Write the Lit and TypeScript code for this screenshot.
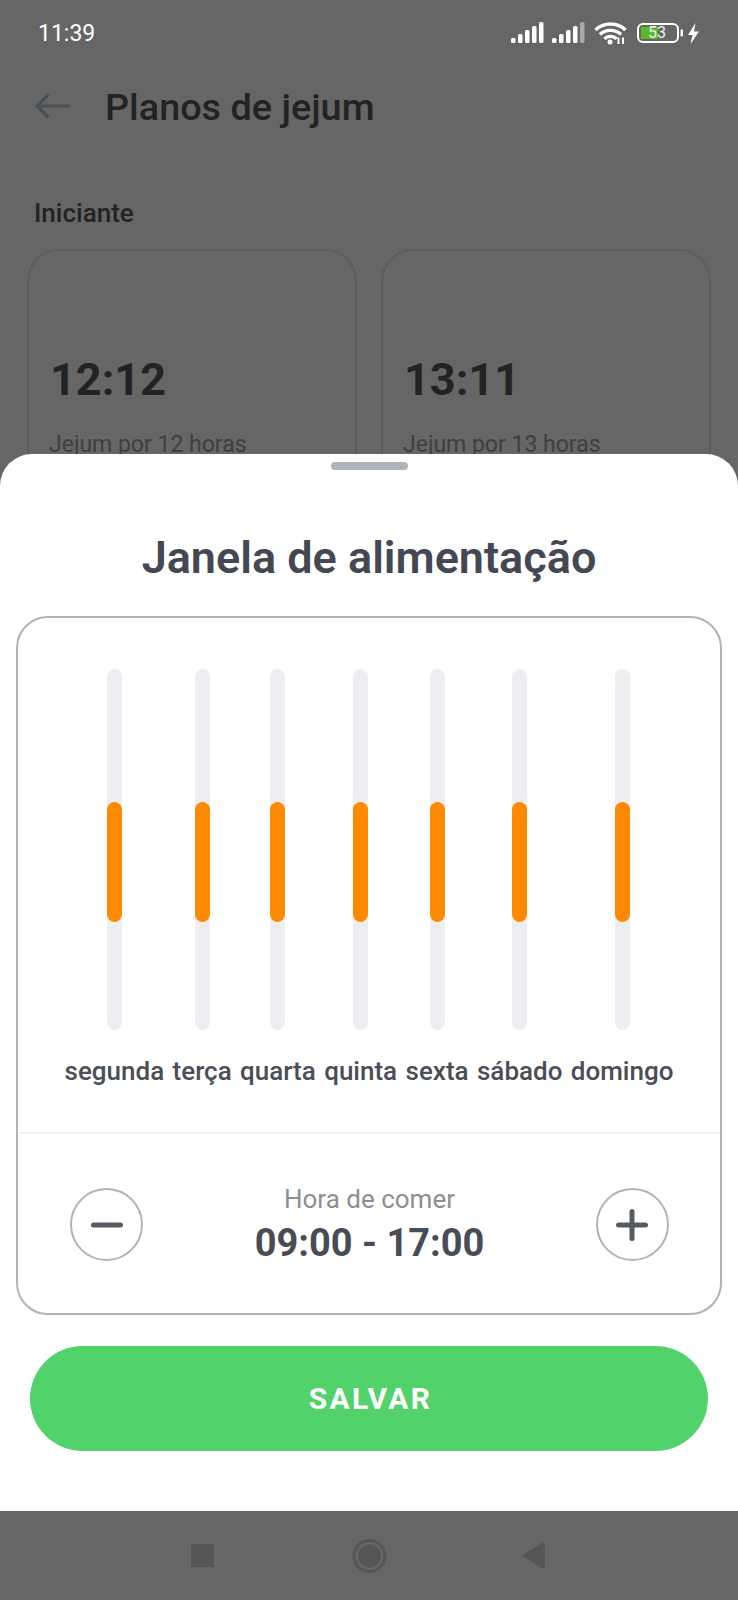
import { LitElement, html, css, svg } from 'lit';
import { customElement } from 'lit/decorators.js';

const DAYS = ['segunda', 'terça', 'quarta', 'quinta', 'sexta', 'sábado', 'domingo'];

const signal = (last: string) => svg`
  <svg class="signal" width="33" height="22" viewBox="0 0 33 22">
    <rect x="0" y="16" width="4.5" height="5" rx="1.5" fill="#fff" />
    <rect x="7" y="12" width="4.5" height="9" rx="1.5" fill="#fff" />
    <rect x="14" y="8" width="4.5" height="13" rx="1.5" fill="#fff" />
    <rect x="21" y="4" width="4.5" height="17" rx="1.5" fill="#fff" />
    <rect x="28" y="0" width="4.5" height="21" rx="1.5" fill="${last}" />
  </svg>
`;

@customElement('app-root')
export class AppRoot extends LitElement {
  static styles = css`
    :host {
      display: block;
      width: 738px;
      height: 1600px;
      background: #666;
      font-family: Roboto, 'Noto Sans', sans-serif;
      overflow: hidden;
    }

    .page {
      display: flex;
      flex-direction: column;
      height: 1600px;
    }

    .behind {
      height: 454px;
      flex: none;
      overflow: hidden;
      box-sizing: border-box;
    }

    .status {
      display: flex;
      align-items: center;
      height: 22px;
      padding: 22px 38px 0 38px;
      color: #fff;
      font-size: 23px;
      line-height: 22px;
    }

    .status .time {
      flex: 1;
      margin-top: 2px;
    }

    .status svg {
      display: block;
      flex: none;
    }

    .status .signal {
      margin-right: 8px;
    }

    .status .wifi {
      margin: 0 10px 0 1px;
    }

    .status .bolt {
      margin-left: 4px;
    }

    .battery {
      position: relative;
      flex: none;
      width: 46px;
      height: 20px;
    }

    .battery .pct {
      position: absolute;
      left: 8px;
      top: 0;
      width: 24px;
      text-align: center;
      font-size: 16px;
      line-height: 20px;
      color: #eef5e8;
    }

    .header {
      display: flex;
      align-items: center;
      gap: 34px;
      height: 46px;
      padding: 40px 0 0 35px;
    }

    .header svg {
      margin-top: -2px;
    }

    .header h1 {
      margin: 0;
      font-size: 37.8px;
      line-height: 46px;
      font-weight: 500;
      color: #232323;
    }

    .section {
      margin: 68px 0 0 34px;
      font-size: 26px;
      line-height: 30px;
      font-weight: 500;
      color: #232323;
    }

    .plans {
      display: flex;
      gap: 24px;
      padding: 21px 27px 0 27px;
    }

    .plan {
      flex: 1;
      height: 300px;
      box-sizing: border-box;
      border: 2px solid #5c5c5c;
      border-radius: 32px;
      padding: 101px 0 0 21px;
    }

    .plan .ratio {
      font-size: 45px;
      line-height: 56px;
      font-weight: 700;
      color: #232323;
    }

    .plan .desc {
      margin-top: 23px;
      margin-left: -1px;
      font-size: 23px;
      line-height: 28px;
      color: #3f3f3f;
    }

    .sheet {
      flex: 1;
      display: flex;
      flex-direction: column;
      align-items: center;
      background: #fff;
      border-radius: 32px 32px 0 0;
    }

    .handle {
      width: 77px;
      height: 8px;
      margin-top: 8px;
      border-radius: 4px;
      background: #aeb4ba;
    }

    .sheet h2 {
      margin: 58px 0 0;
      font-size: 45px;
      line-height: 60px;
      font-weight: 600;
      color: #434852;
    }

    .card {
      box-sizing: border-box;
      width: 706px;
      height: 699px;
      margin-top: 28px;
      border: 2px solid #b0b3b6;
      border-radius: 32px;
      display: flex;
      flex-direction: column;
    }

    .days {
      display: flex;
      justify-content: center;
      gap: 8.4px;
      height: 516px;
      padding-top: 51px;
      box-sizing: border-box;
      border-bottom: 2px solid #f1f2f4;
    }

    .day {
      display: flex;
      flex-direction: column;
      align-items: center;
      gap: 25px;
      font-size: 26px;
      line-height: 32px;
      font-weight: 500;
      color: #4a4e57;
    }

    .track {
      display: flow-root;
      width: 15px;
      height: 361px;
      border-radius: 8px;
      background: #edeef2;
    }

    .fill {
      width: 15px;
      height: 120px;
      margin-top: 133px;
      border-radius: 8px;
      background: #ff8a00;
    }

    .hours {
      flex: 1;
      display: flex;
      align-items: center;
      justify-content: space-between;
      padding: 2px 51px 0 52px;
    }

    .round {
      display: flex;
      align-items: center;
      justify-content: center;
      width: 73px;
      height: 73px;
      box-sizing: border-box;
      border: 2px solid #b0b3b6;
      border-radius: 50%;
    }

    .eating {
      text-align: center;
    }

    .eating .label {
      margin-bottom: 2px;
      font-size: 26px;
      line-height: 34px;
      color: #8b8e94;
    }

    .eating .range {
      font-size: 38px;
      line-height: 50px;
      font-weight: 700;
      color: #474c56;
    }

    .save {
      display: flex;
      align-items: center;
      justify-content: center;
      width: 678px;
      height: 105px;
      margin-top: 31px;
      padding-left: 3px;
      box-sizing: border-box;
      border-radius: 53px;
      background: #52d26a;
      color: #fff;
      font-size: 30px;
      font-weight: 700;
      letter-spacing: 2.3px;
    }

    .nav {
      flex: none;
      height: 89px;
      display: flex;
      align-items: flex-start;
      padding-top: 28px;
      box-sizing: border-box;
    }

    .nav svg {
      display: block;
    }
  `;

  render() {
    return html`
      <div class="page">
        <div class="behind">
          <div class="status">
            <span class="time">11:39</span>
            ${signal('#fff')} ${signal('#a9a9a9')}
            <svg class="wifi" width="33" height="23" viewBox="0 0 33 23" fill="none" stroke="#fff" stroke-width="3.4">
              <path d="M1.5 8 C9.5 0 23.5 0 31.5 8" />
              <path d="M6 12.5 C11.5 7 21.5 7 27 12.5" />
              <path d="M10.5 17 C13.5 13.5 19.5 13.5 22.5 17" />
              <circle cx="16" cy="20" r="2.5" fill="#fff" stroke="none" />
              <path d="M24.5 15.5 V22 M29 15.5 V22" stroke-width="2" />
            </svg>
            <div class="battery">
              <svg width="46" height="20" viewBox="0 0 46 20">
                <rect x="1" y="1" width="40" height="18" rx="5" fill="none" stroke="#fff" stroke-width="2" />
                <rect x="4" y="4" width="17" height="12" rx="1" fill="#5cb82a" />
                <rect x="43.5" y="6.5" width="2.5" height="7" rx="1" fill="#fff" />
              </svg>
              <span class="pct">53</span>
            </div>
            <svg class="bolt" width="13" height="21" viewBox="0 0 13 21">
              <path d="M8.5 0 L1 12 H5.5 L3.5 21 L12 8.5 H7 Z" fill="#fff" />
            </svg>
          </div>

          <div class="header">
            <svg width="36" height="26" viewBox="0 0 36 26" fill="none" stroke="#4b5055" stroke-width="3.2">
              <path d="M35 13 H2 M13.5 1.5 L2 13 L13.5 24.5" />
            </svg>
            <h1>Planos de jejum</h1>
          </div>

          <div class="section">Iniciante</div>

          <div class="plans">
            <div class="plan">
              <div class="ratio">12:12</div>
              <div class="desc">Jejum por 12 horas</div>
            </div>
            <div class="plan">
              <div class="ratio">13:11</div>
              <div class="desc">Jejum por 13 horas</div>
            </div>
          </div>
        </div>

        <div class="sheet">
          <div class="handle"></div>
          <h2>Janela de alimentação</h2>

          <div class="card">
            <div class="days">
              ${DAYS.map(
                (d) => html`
                  <div class="day">
                    <div class="track"><div class="fill"></div></div>
                    <span>${d}</span>
                  </div>
                `
              )}
            </div>

            <div class="hours">
              <div class="round">
                <svg width="32" height="32" viewBox="0 0 32 32">
                  <rect x="0" y="13.5" width="32" height="5" rx="2.5" fill="#565b64" />
                </svg>
              </div>
              <div class="eating">
                <div class="label">Hora de comer</div>
                <div class="range">09:00 - 17:00</div>
              </div>
              <div class="round">
                <svg width="32" height="32" viewBox="0 0 32 32" fill="#565b64">
                  <rect x="0" y="13.5" width="32" height="5" rx="2.5" />
                  <rect x="13.5" y="0" width="5" height="32" rx="2.5" />
                </svg>
              </div>
            </div>
          </div>

          <div class="save">SALVAR</div>
        </div>

        <div class="nav">
          <svg width="738" height="40" viewBox="0 0 738 40">
            <rect x="191" y="5" width="23" height="23" fill="#555" />
            <circle cx="369.5" cy="17" r="15.5" fill="none" stroke="#555" stroke-width="3" />
            <circle cx="369.5" cy="17" r="11.5" fill="#555" />
            <path d="M522 16.5 L543 3.5 Q545 3 545 5 V28 Q545 30 543 29.5 Z" fill="#555" />
          </svg>
        </div>
      </div>
    `;
  }
}
